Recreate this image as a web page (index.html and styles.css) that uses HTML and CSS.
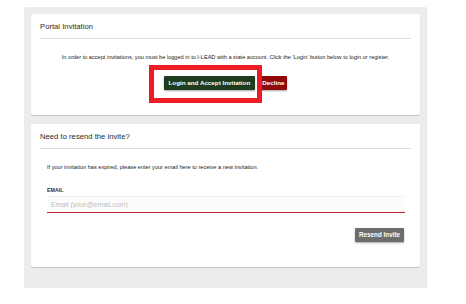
FILE: index.html
```html
<!DOCTYPE html>
<html lang="en">
<head>
  <meta charset="UTF-8" />
  <meta name="viewport" content="width=device-width, initial-scale=1.0" />
  <title>Portal Invitation</title>
  <link rel="stylesheet" href="styles.css">
</head>
<body>
  <div class="page">
    <div class="card">
      <h2 class="card-title">Portal Invitation</h2>
      <p class="intro">In order to accept invitations, you must be logged in to I-LEAD with a state account. Click the 'Login' button below to login or register.</p>
      <div class="actions">
        <span class="login-wrap">
          <a class="btn btn-login" href="#">Login and Accept Invitation</a>
          <span class="highlight"></span>
        </span>
        <a class="btn btn-decline" href="#">Decline</a>
      </div>
    </div>

    <div class="card">
      <h2 class="card-title">Need to resend the invite?</h2>
      <div class="card-body">
        <p class="note">If your invitation has expired, please enter your email here to receive a new invitation.</p>
        <label class="field-label" for="email">EMAIL</label>
        <input class="field" id="email" type="email" placeholder="Email (your@email.com)" />
        <div class="resend-row">
          <a class="btn btn-resend" href="#">Resend Invite</a>
        </div>
      </div>
    </div>
  </div>
</body>
</html>
```

FILE: styles.css
```css
* { margin: 0; padding: 0; box-sizing: border-box; }
body {
  font-family: 'Liberation Sans', Arial, sans-serif;
  background: #fff;
  color: #222;
  padding: 7px 0 0 24px;
}
.page {
  width: 403px;
  background: #ececec;
  padding: 7px 7px 21px;
  border-radius: 2px;
  box-shadow: 0 1px 1px rgba(0,0,0,0.12);
}
.card {
  background: #fff;
  padding: 0 9px 25px;
  border-radius: 2px;
  box-shadow: 0 1px 1px rgba(0,0,0,0.18);
}
.card + .card { margin-top: 9px; }
.card-title {
  font-size: 7.7px;
  font-weight: normal;
  line-height: 9px;
  color: #2b2b2b;
  padding: 8px 0 6.5px;
  border-bottom: 1.5px solid #dcdce0;
}
.intro {
  font-size: 5.6px;
  line-height: 7px;
  text-align: center;
  margin-top: 15px;
}
.actions {
  display: flex;
  justify-content: center;
  gap: 5px;
  margin-top: 15.5px;
}
.login-wrap { position: relative; display: flex; }
.highlight {
  position: absolute;
  left: -15px; top: -11px;
  width: 113px; height: 38px;
  border: 5px solid #ed1c24;
}
.btn {
  display: inline-block;
  font-size: 6.25px;
  font-weight: bold;
  line-height: 8px;
  color: #fff;
  text-decoration: none;
  padding: 3px 4.5px;
  border-radius: 1px;
  box-shadow: 0 1px 2px rgba(0,0,0,0.35);
}
.btn-login { background: #1e3d1f; }
.btn-decline { background: #8f0a0a; padding: 3px 2.5px; }
.card-body { padding: 0 6px 0 7px; }
.note {
  font-size: 5.6px;
  line-height: 7px;
  margin-top: 15px;
}
.field-label {
  display: block;
  font-size: 5.3px;
  font-weight: bold;
  line-height: 6px;
  color: #2a2f3d;
  margin-top: 16.5px;
}
.field {
  display: block;
  width: 100%;
  height: 17px;
  margin-top: 3px;
  font-family: inherit;
  font-size: 7px;
  padding: 0 4px;
  color: #333;
  background: #fcfcfc;
  border: none;
  border-top: 1px solid #f2f2f2;
  border-bottom: 1.5px solid #c4262b;
  outline: none;
}
.field::placeholder { color: #bdbdbd; }
.resend-row {
  display: flex;
  justify-content: flex-end;
  margin-top: 15px;
  padding-right: 1px;
}
.btn-resend { background: #6b6e6a; padding: 3px 4px; font-size: 6.3px; }
```
